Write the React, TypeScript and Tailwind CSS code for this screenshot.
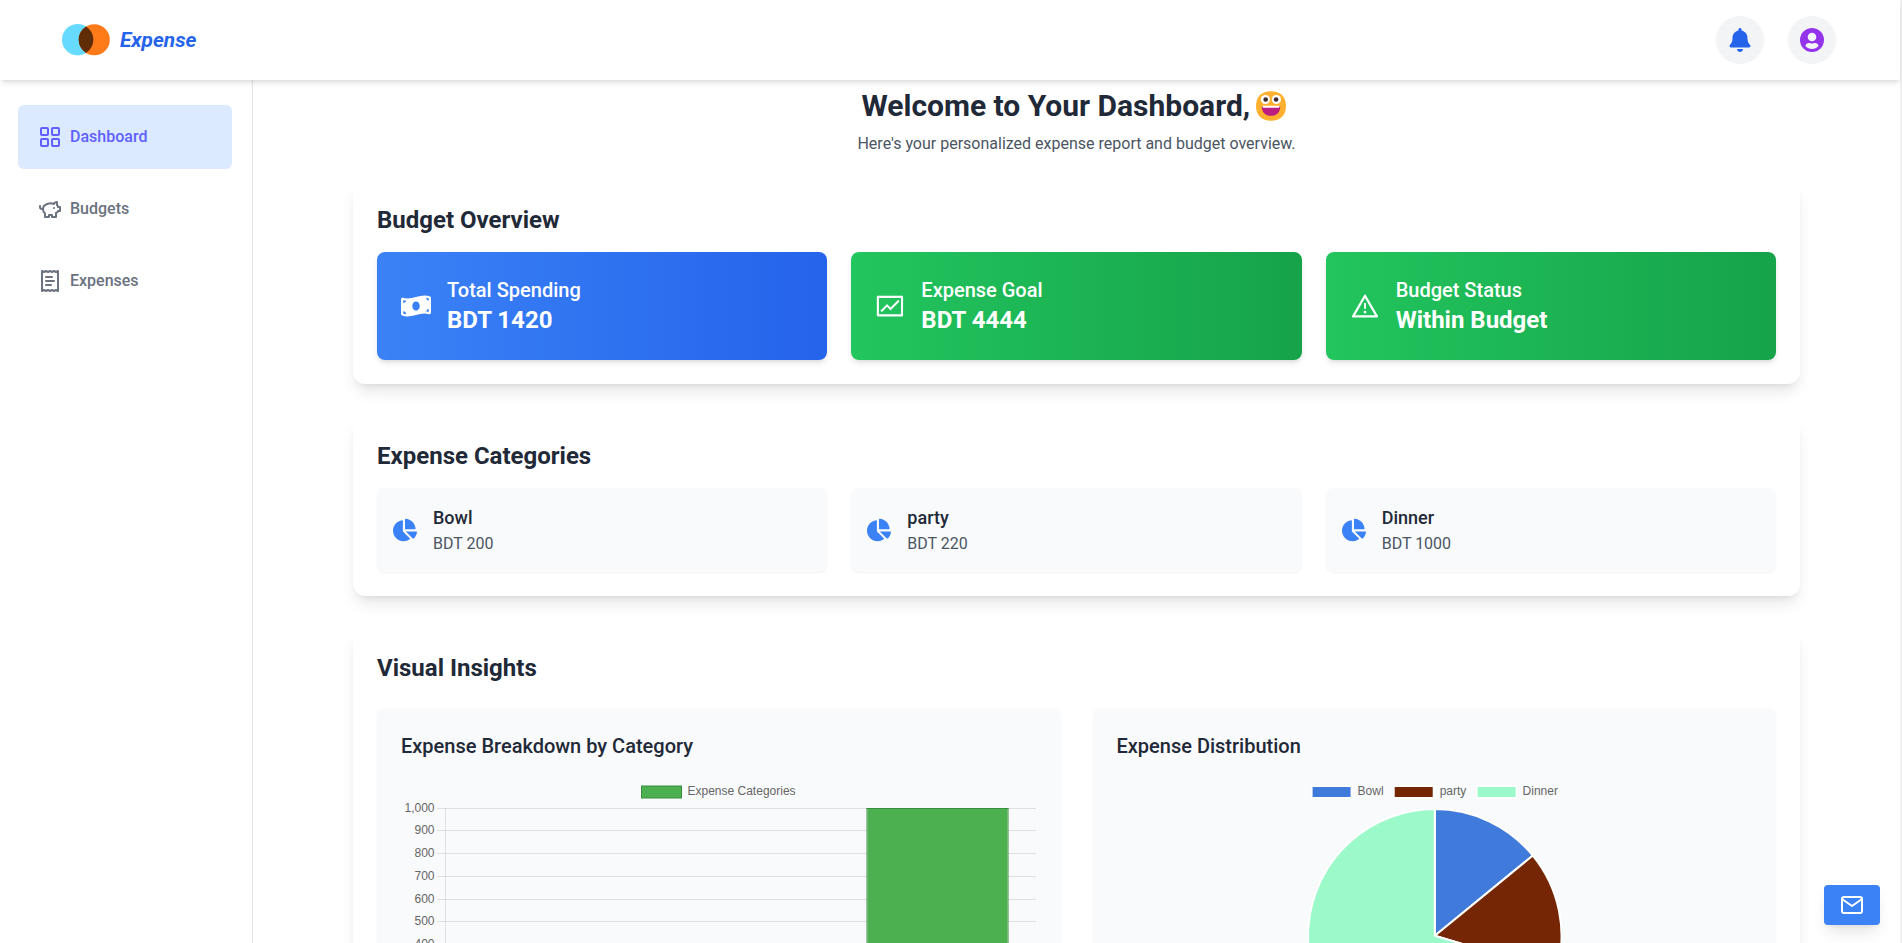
import type { ReactNode } from "react";
import { LuLayoutGrid, LuPiggyBank, LuReceiptText } from "react-icons/lu";
import { FaBell, FaChartPie, FaMoneyBillWave } from "react-icons/fa";
import { AiOutlineFund, AiOutlineWarning } from "react-icons/ai";
import { FiMail } from "react-icons/fi";

const navItems = [
  { label: "Dashboard", icon: LuLayoutGrid, active: true },
  { label: "Budgets", icon: LuPiggyBank, active: false },
  { label: "Expenses", icon: LuReceiptText, active: false },
];

const stats = [
  { label: "Total Spending", value: "BDT 1420", icon: FaMoneyBillWave, tone: "from-[#3b82f6] to-[#2563eb]" },
  { label: "Expense Goal", value: "BDT 4444", icon: AiOutlineFund, tone: "from-[#22c55e] to-[#16a34a]" },
  { label: "Budget Status", value: "Within Budget", icon: AiOutlineWarning, tone: "from-[#22c55e] to-[#16a34a]" },
];

const categories = [
  { name: "Bowl", amount: 200, color: "#407bdb" },
  { name: "party", amount: 220, color: "#752604" },
  { name: "Dinner", amount: 1000, color: "#9cf9c9" },
];

function Logo() {
  return (
    <svg width="48" height="32" viewBox="0 0 48 32" className="block">
      <circle cx="15.7" cy="15.7" r="15.7" fill="#66dbff" />
      <circle cx="32.3" cy="15.7" r="15.5" fill="#ff7a18" />
      <path d="M24 2.4a15.7 15.7 0 0 1 0 26.6a15.7 15.7 0 0 1 0-26.6z" fill="#5f2c05" />
    </svg>
  );
}

function ProfileIcon() {
  return (
    <svg width="24" height="24" viewBox="0 0 24 24" className="block">
      <circle cx="12" cy="12" r="12" fill="#9333ea" />
      <circle cx="12" cy="9" r="4.3" fill="#f3f4f6" />
      <path
        d="M5.4 18.1C5.6 16 7.2 15.1 9 15.1c1.1 0 1.8.5 3 .5s1.9-.5 3-.5c1.8 0 3.4.9 3.6 3C16.9 20 14.6 21 12 21s-4.9-1-6.6-2.9z"
        fill="#f3f4f6"
      />
    </svg>
  );
}

function GrinningFace() {
  return (
    <svg width="36" height="36" viewBox="0 0 36 36" className="mx-[2.7px] block">
      <path d="M18 3.2C27.4 3.2 33 8.6 33 18S27.4 32.7 18 32.7 3 27.4 3 18 8.6 3.2 18 3.2z" fill="#ffb02e" />
      <circle cx="12.4" cy="11.5" r="4.6" fill="#fff" />
      <circle cx="23.4" cy="11.5" r="4.6" fill="#fff" />
      <circle cx="12.7" cy="11.5" r="2.3" fill="#402a32" />
      <circle cx="23.1" cy="11.5" r="2.3" fill="#402a32" />
      <path d="M8.8 18.2h18.4c.2 6-3.7 9.5-9.2 9.5s-9.4-3.5-9.2-9.5z" fill="#bb1d80" />
      <path d="M9.5 17.8h17v.7c0 .8-.6 1.3-1.4 1.3H10.9c-.8 0-1.4-.5-1.4-1.3z" fill="#fff" />
    </svg>
  );
}

function BarChart() {
  const lines = [32, 54, 77, 100, 123, 145, 168, 191, 214, 236, 259];
  return (
    <svg width="636" height="318" viewBox="0 0 636 318" className="block font-['Liberation_Sans',sans-serif] text-[12px]">
      <rect x="240.5" y="10" width="40" height="12" fill="#4caf50" stroke="#388e3c" />
      <text x="286.5" y="19" fill="#666">Expense Categories</text>
      <g fill="#000" fillOpacity="0.1">
        {lines.map((y) => (
          <rect key={y} x="36" y={y} width="599" height="1" />
        ))}
        <rect x="44" y="32" width="1" height="228" />
      </g>
      {lines.map((y, i) => (
        <text key={y} x="33.5" y={y + 3.5} textAnchor="end" fill="#666">
          {((10 - i) * 100).toLocaleString("en-US")}
        </text>
      ))}
      <rect x="465" y="32" width="143" height="228" fill="#388e3c" fillOpacity="0.5" />
      <rect x="466.5" y="32" width="140" height="228" fill="#4caf50" />
      <rect x="465.5" y="32" width="142" height="1" fill="#388e3c" />
    </svg>
  );
}

function PieChart() {
  const cx = 317.8;
  const cy = 159.8;
  const r = 126.7;
  const total = categories.reduce((sum, c) => sum + c.amount, 0);
  const point = (v: number) => {
    const a = (v / total) * Math.PI * 2;
    return `${cx + r * Math.sin(a)} ${cy - r * Math.cos(a)}`;
  };
  const starts = [0, 200, 420];
  const legendX = [194.6, 276.7, 359.6];
  return (
    <svg width="636" height="318" viewBox="0 0 636 318" className="block font-['Liberation_Sans',sans-serif] text-[12px]">
      {categories.map((c, i) => (
        <g key={c.name}>
          <rect x={legendX[i]} y="10" width="40" height="12" fill={c.color} stroke="#fff" strokeWidth="2" />
          <text x={legendX[i] + 46} y="19" fill="#666">{c.name}</text>
          <path
            d={`M${cx} ${cy}L${point(starts[i])}A${r} ${r} 0 ${c.amount * 2 > total ? 1 : 0} 1 ${point(starts[i] + c.amount)}Z`}
            fill={c.color}
            stroke="#fff"
            strokeWidth="2"
            strokeLinejoin="bevel"
          />
        </g>
      ))}
    </svg>
  );
}

function Section({ title, spacing, children }: { title: string; spacing: string; children: ReactNode }) {
  return (
    <section className="mb-8 rounded-xl bg-white p-6 shadow-lg">
      <h2 className={`text-2xl font-bold text-[#1f2937] ${spacing}`}>{title}</h2>
      {children}
    </section>
  );
}

export default function App() {
  return (
    <div className="flex h-[943px] overflow-hidden bg-white font-[Roboto,sans-serif]">
      <div className="flex min-w-0 flex-1 flex-col">
        <header className="relative z-10 flex h-20 shrink-0 items-center justify-between bg-white pr-16 pl-[62px] shadow-md">
          <div className="flex items-center gap-2.5">
            <Logo />
            <span className="pt-0.5 text-[20.8px] font-bold text-[#2563eb] italic">Expense</span>
          </div>
          <div className="flex gap-6">
            <button className="flex size-12 items-center justify-center rounded-full bg-[#f3f4f6] text-[#2563eb]">
              <FaBell size={24} />
            </button>
            <button className="flex size-12 items-center justify-center rounded-full bg-[#f3f4f6]">
              <ProfileIcon />
            </button>
          </div>
        </header>

        <div className="flex min-h-0 flex-1">
          <aside className="flex w-[253px] shrink-0 flex-col gap-2 border-r border-[#e5e5e5] pt-[25px] pr-5 pl-[18px]">
            {navItems.map(({ label, icon: Icon, active }) => (
              <a
                key={label}
                className={`flex h-16 items-center gap-2 rounded-md px-5 font-medium ${
                  active ? "bg-[#dbeafe] text-[#615fff]" : "text-[#6b7280]"
                }`}
              >
                <Icon size={24} />
                {label}
              </a>
            ))}
          </aside>

          <main className="min-w-0 flex-1 overflow-hidden px-[100px] pt-2">
            <div className="mb-6 text-center">
              <h1 className="flex items-center justify-center text-3xl leading-9 font-bold text-[#1f2937]">
                Welcome to Your Dashboard,
                <GrinningFace />
              </h1>
              <p className="mt-2 text-[#4b5563]">Here's your personalized expense report and budget overview.</p>
            </div>

            <Section title="Budget Overview" spacing="mb-4">
              <div className="grid grid-cols-3 gap-6">
                {stats.map(({ label, value, icon: Icon, tone }) => (
                  <div key={label} className={`flex items-center gap-4 rounded-lg bg-linear-to-r p-6 text-white shadow-md ${tone}`}>
                    <Icon size={30} />
                    <div>
                      <h3 className="text-xl font-medium">{label}</h3>
                      <p className="text-2xl font-bold">{value}</p>
                    </div>
                  </div>
                ))}
              </div>
            </Section>

            <Section title="Expense Categories" spacing="mb-4">
              <div className="grid grid-cols-3 gap-6">
                {categories.map((c) => (
                  <div key={c.name} className="flex items-center gap-4 rounded-lg bg-[#f9fafb] p-4 shadow-xs">
                    <FaChartPie size={24} className="text-[#3b82f6]" />
                    <div>
                      <h3 className="text-lg font-medium text-[#1f2937]">{c.name}</h3>
                      <p className="text-[#4b5563]">BDT {c.amount}</p>
                    </div>
                  </div>
                ))}
              </div>
            </Section>

            <Section title="Visual Insights" spacing="mb-6">
              <div className="grid grid-cols-2 gap-8">
                <div className="rounded-lg bg-[#f9fafb] p-6 shadow-xs">
                  <h3 className="mb-4 text-xl font-medium text-[#1f2937]">Expense Breakdown by Category</h3>
                  <BarChart />
                </div>
                <div className="rounded-lg bg-[#f9fafb] p-6 shadow-xs">
                  <h3 className="mb-4 text-xl font-medium text-[#1f2937]">Expense Distribution</h3>
                  <PieChart />
                </div>
              </div>
            </Section>
          </main>
        </div>
      </div>
      <div className="w-0.5 shrink-0 bg-[#f1f1f1]" />

      <button className="fixed right-[22px] bottom-[18px] z-20 flex h-10 w-14 items-center justify-center rounded bg-[#3b82f6] text-white shadow-lg">
        <FiMail size={24} />
      </button>
    </div>
  );
}
